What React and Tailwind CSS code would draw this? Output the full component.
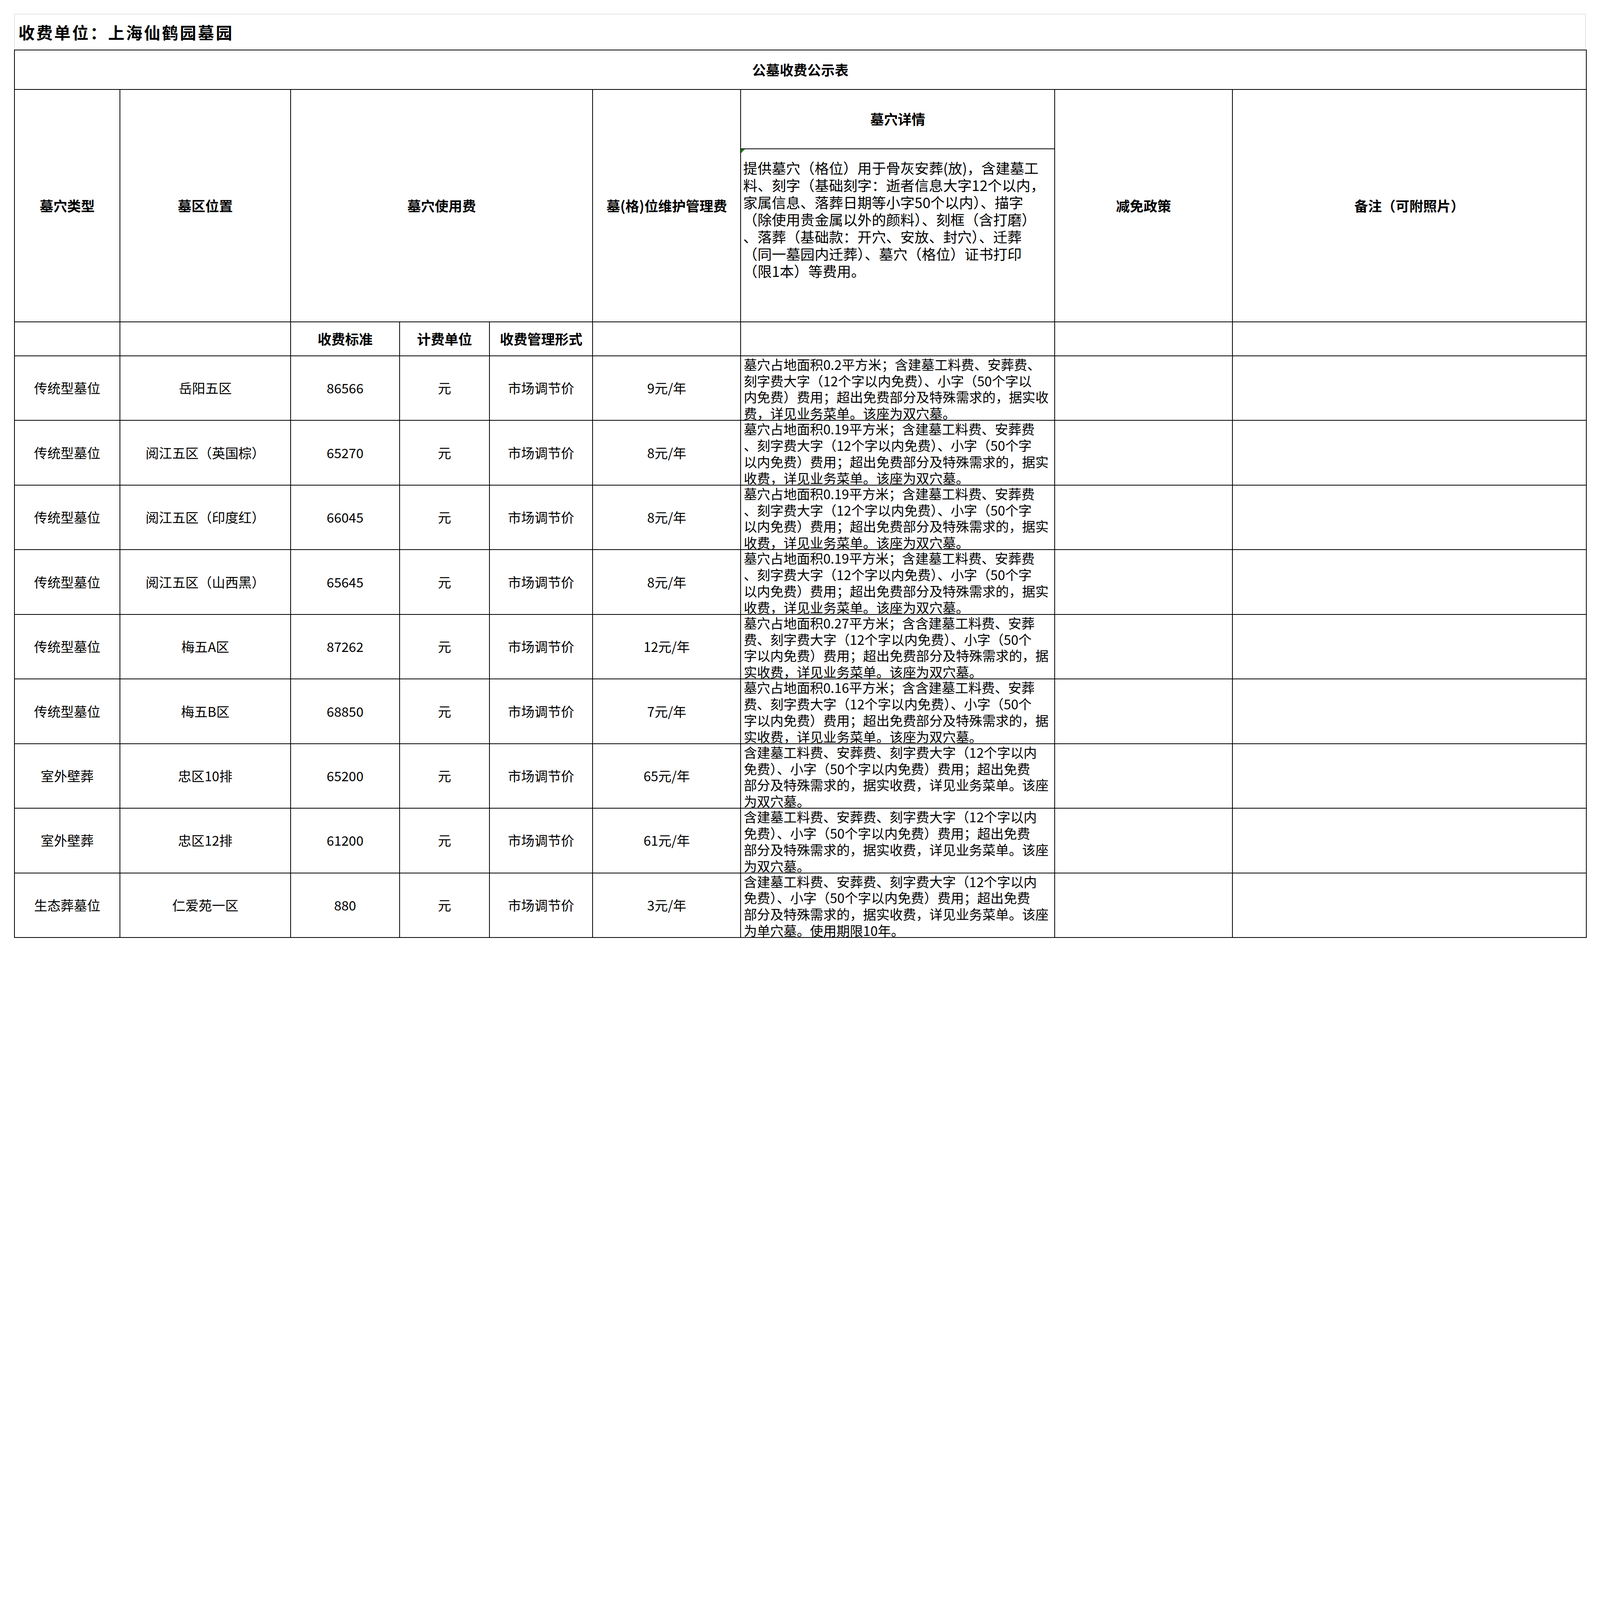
import { useEffect, useState } from "react";

const cell = "border border-black p-0 text-center align-middle";
const head = cell + " font-bold text-[13.5px]";

const d019 = [
  "墓穴占地面积0.19平方米；含建墓工料费、安葬费",
  "、刻字费大字（12个字以内免费）、小字（50个字",
  "以内免费）费用；超出免费部分及特殊需求的，据实",
  "收费，详见业务菜单。该座为双穴墓。",
];

const wall = [
  "含建墓工料费、安葬费、刻字费大字（12个字以内",
  "免费）、小字（50个字以内免费）费用；超出免费",
  "部分及特殊需求的，据实收费，详见业务菜单。该座",
  "为双穴墓。",
];

const rows = [
  {
    type: "传统型墓位", area: "岳阳五区", price: "86566", fee: "9元/年",
    detail: [
      "墓穴占地面积0.2平方米；含建墓工料费、安葬费、",
      "刻字费大字（12个字以内免费）、小字（50个字以",
      "内免费）费用；超出免费部分及特殊需求的，据实收",
      "费，详见业务菜单。该座为双穴墓。",
    ],
  },
  { type: "传统型墓位", area: "阅江五区（英国棕）", price: "65270", fee: "8元/年", detail: d019 },
  { type: "传统型墓位", area: "阅江五区（印度红）", price: "66045", fee: "8元/年", detail: d019 },
  { type: "传统型墓位", area: "阅江五区（山西黑）", price: "65645", fee: "8元/年", detail: d019 },
  {
    type: "传统型墓位", area: "梅五A区", price: "87262", fee: "12元/年",
    detail: [
      "墓穴占地面积0.27平方米；含含建墓工料费、安葬",
      "费、刻字费大字（12个字以内免费）、小字（50个",
      "字以内免费）费用；超出免费部分及特殊需求的，据",
      "实收费，详见业务菜单。该座为双穴墓。",
    ],
  },
  {
    type: "传统型墓位", area: "梅五B区", price: "68850", fee: "7元/年",
    detail: [
      "墓穴占地面积0.16平方米；含含建墓工料费、安葬",
      "费、刻字费大字（12个字以内免费）、小字（50个",
      "字以内免费）费用；超出免费部分及特殊需求的，据",
      "实收费，详见业务菜单。该座为双穴墓。",
    ],
  },
  { type: "室外壁葬", area: "忠区10排", price: "65200", fee: "65元/年", detail: wall },
  { type: "室外壁葬", area: "忠区12排", price: "61200", fee: "61元/年", detail: wall },
  {
    type: "生态葬墓位", area: "仁爱苑一区", price: "880", fee: "3元/年",
    detail: [
      "含建墓工料费、安葬费、刻字费大字（12个字以内",
      "免费）、小字（50个字以内免费）费用；超出免费",
      "部分及特殊需求的，据实收费，详见业务菜单。该座",
      "为单穴墓。使用期限10年。",
    ],
  },
];

const intro = [
  "提供墓穴（格位）用于骨灰安葬(放)，含建墓工",
  "料、刻字（基础刻字：逝者信息大字12个以内，",
  "家属信息、落葬日期等小字50个以内）、描字",
  "（除使用贵金属以外的颜料）、刻框（含打磨）",
  "、落葬（基础款：开穴、安放、封穴）、迁葬",
  "（同一墓园内迁葬）、墓穴（格位）证书打印",
  "（限1本）等费用。",
];

// the sheet is laid out on a 1568px-wide grid and scaled to the window
const BASE_W = 1568;

export default function App() {
  const [scale, setScale] = useState(() => window.innerWidth / BASE_W);
  useEffect(() => {
    const onResize = () => setScale(window.innerWidth / BASE_W);
    window.addEventListener("resize", onResize);
    return () => window.removeEventListener("resize", onResize);
  }, []);

  return (
    <div
      className="w-[1568px] min-h-[932px] bg-white text-black [font-family:'Noto_Sans_CJK_SC',sans-serif]"
      style={{ zoom: scale }}
    >
      <div className="pt-[13.4px] pl-[13.7px] w-[1554.2px]">
        {/* title strip */}
        <div className="h-[35.1px] flex items-center pl-[3.5px] border-t border-x border-[#e2e2e2] text-[16px] font-bold tracking-[1.6px]">
          收费单位：上海仙鹤园墓园
        </div>

        <table className="table-fixed border-collapse w-[1540.5px] text-[13px]">
          <colgroup>
            <col className="w-[103.6px]" />
            <col className="w-[167px]" />
            <col className="w-[107px]" />
            <col className="w-[88px]" />
            <col className="w-[101.2px]" />
            <col className="w-[145.1px]" />
            <col className="w-[307.6px]" />
            <col className="w-[174.3px]" />
            <col className="w-[346.7px]" />
          </colgroup>
          <tbody>
            <tr className="h-[38.7px]">
              <td colSpan={9} className={head}>公墓收费公示表</td>
            </tr>
            <tr className="h-[58.3px]">
              <td rowSpan={2} className={head}>墓穴类型</td>
              <td rowSpan={2} className={head}>墓区位置</td>
              <td rowSpan={2} colSpan={3} className={head}>墓穴使用费</td>
              <td rowSpan={2} className={head}>墓(格)位维护管理费</td>
              <td className={head}>墓穴详情</td>
              <td rowSpan={2} className={head}>减免政策</td>
              <td rowSpan={2} className={head}>备注（可附照片）</td>
            </tr>
            <tr className="h-[169.4px]">
              <td className={cell + " relative text-left align-top"}>
                <span className="absolute top-0 left-0 w-0 h-0 border-t-[4px] border-t-[#0a8a0a] border-r-[4px] border-r-transparent" />
                <div className="pt-[10px] pl-[2px] text-[14px] leading-[16.8px] whitespace-nowrap">
                  {intro.map((l, i) => <div key={i}>{l}</div>)}
                </div>
              </td>
            </tr>
            <tr className="h-[33.4px]">
              <td className={cell}></td>
              <td className={cell}></td>
              <td className={head}>收费标准</td>
              <td className={head}>计费单位</td>
              <td className={head}>收费管理形式</td>
              <td className={cell}></td>
              <td className={cell}></td>
              <td className={cell}></td>
              <td className={cell}></td>
            </tr>
            {rows.map((r, i) => (
              <tr key={i} className="h-[63.35px]">
                <td className={cell}>{r.type}</td>
                <td className={cell}>{r.area}</td>
                <td className={cell}>{r.price}</td>
                <td className={cell}>元</td>
                <td className={cell}>市场调节价</td>
                <td className={cell}>{r.fee}</td>
                <td className={cell + " text-left align-top"}>
                  <div className="h-[62.4px] overflow-hidden pl-[2.5px] leading-[16px] whitespace-nowrap">
                    {r.detail.map((l, j) => <div key={j}>{l}</div>)}
                  </div>
                </td>
                <td className={cell}></td>
                <td className={cell}></td>
              </tr>
            ))}
          </tbody>
        </table>
      </div>
    </div>
  );
}
